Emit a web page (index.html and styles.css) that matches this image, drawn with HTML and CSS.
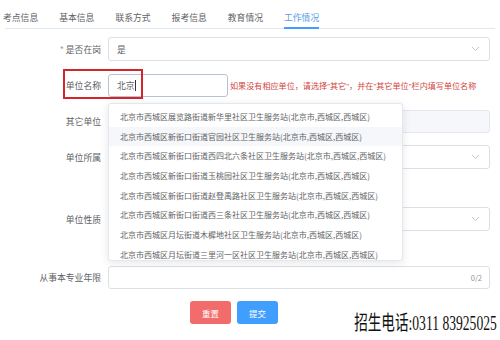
FILE: index.html
```html
<!DOCTYPE html>
<html lang="zh-CN">
<head>
  <meta charset="UTF-8">
  <title>工作情况</title>
  <link rel="stylesheet" href="styles.css">
</head>
<body>
  <div class="tabs">
    <span class="tab">考点信息</span>
    <span class="tab">基本信息</span>
    <span class="tab">联系方式</span>
    <span class="tab">报考信息</span>
    <span class="tab">教育情况</span>
    <span class="tab active">工作情况</span>
  </div>

  <form class="form">
    <div class="row">
      <label class="label"><span class="star">*</span> 是否在岗</label>
      <div class="field select">
        <span>是</span>
        <svg class="arrow" width="9" height="6" viewBox="0 0 9 6"><path d="M1 1l3.5 3.5L8 1" fill="none" stroke="#c0c4cc" stroke-width="1"/></svg>
      </div>
    </div>

    <div class="row">
      <label class="label">单位名称</label>
      <div class="field short focus"><span>北京</span><i class="caret"></i></div>
      <span class="hint">如果没有相应单位，请选择<q>其它</q>，并在<q>其它单位</q>栏内填写单位名称</span>
      <div class="mark"></div>

      <!-- autocomplete list -->
      <ul class="suggest">
        <li>北京市西城区展览路街道新华里社区卫生服务站(北京市,西城区,西城区)</li>
        <li class="hover">北京市西城区新街口街道官园社区卫生服务站(北京市,西城区,西城区)</li>
        <li>北京市西城区新街口街道西四北六条社区卫生服务站(北京市,西城区,西城区)</li>
        <li>北京市西城区新街口街道玉桃园社区卫生服务站(北京市,西城区,西城区)</li>
        <li>北京市西城区新街口街道赵登禹路社区卫生服务站(北京市,西城区,西城区)</li>
        <li>北京市西城区新街口街道西三条社区卫生服务站(北京市,西城区,西城区)</li>
        <li>北京市西城区月坛街道木樨地社区卫生服务站(北京市,西城区,西城区)</li>
        <li>北京市西城区月坛街道三里河一区社区卫生服务站(北京市,西城区,西城区)</li>
      </ul>
    </div>

    <div class="row">
      <label class="label">其它单位</label>
      <div class="field disabled"></div>
    </div>

    <div class="row">
      <label class="label">单位所属</label>
      <div class="field select">
        <span></span>
        <svg class="arrow" width="9" height="6" viewBox="0 0 9 6"><path d="M1 1l3.5 3.5L8 1" fill="none" stroke="#c0c4cc" stroke-width="1"/></svg>
      </div>
    </div>

    <div class="row gap-big">
      <label class="label">单位性质</label>
      <div class="field select">
        <span></span>
        <svg class="arrow" width="9" height="6" viewBox="0 0 9 6"><path d="M1 1l3.5 3.5L8 1" fill="none" stroke="#c0c4cc" stroke-width="1"/></svg>
      </div>
    </div>

    <div class="row gap-mid">
      <label class="label">从事本专业年限</label>
      <div class="field"><span></span><span class="count">0/2</span></div>
    </div>

    <div class="buttons">
      <button type="button" class="btn reset">重置</button>
      <button type="button" class="btn submit">提交</button>
    </div>
  </form>

  <div class="watermark">招生电话:0311 83925025</div>
</body>
</html>
```

FILE: styles.css
```css
body {
  margin: 0;
  width: 500px;
  height: 340px;
  overflow: hidden;
  background: #fff;
  font-family: "Noto Sans CJK SC", "Noto Sans", sans-serif;
  color: #606266;
  position: relative;
}

.tabs {
  display: flex;
  gap: 21px;
  height: 28px;
  margin: 0 5px;
  border-bottom: 1px solid #e4e7ed;
  font-size: 8.8px;
}

.tabs .tab {
  position: relative;
  line-height: 36px;
  color: #606266;
  white-space: nowrap;
}

.tabs .tab:first-child {
  margin-left: -2px;
}

.tabs .active {
  color: #5a9de6;
}

.tabs .active::after {
  content: "";
  position: absolute;
  left: 0;
  right: 0;
  bottom: -1px;
  height: 2px;
  background: #409eff;
}

.form {
  padding: 8px 10px 0 0;
}

.row {
  position: relative;
  display: flex;
  align-items: center;
  height: 24px;
  margin-bottom: 12px;
}

.row.gap-big {
  margin-top: 38px;
}

.row.gap-mid {
  margin-top: 34px;
}

.label {
  width: 101px;
  flex-shrink: 0;
  padding-right: 7px;
  text-align: right;
  font-size: 8.8px;
  color: #606266;
  white-space: nowrap;
}

.star {
  color: #a0a0a0;
}

.field {
  flex: 1;
  height: 23px;
  box-sizing: border-box;
  border: 1px solid #dcdfe6;
  border-radius: 3px;
  display: flex;
  align-items: center;
  justify-content: space-between;
  padding: 0 9px 0 8px;
  font-size: 8.8px;
  color: #606266;
  background: #fff;
}

.field.select {
  height: 24px;
}

.field.short {
  flex: none;
  width: 120px;
  justify-content: flex-start;
}

.field.focus {
  border-color: #b8c4d6;
}

.caret {
  display: inline-block;
  width: 1px;
  height: 11px;
  background: #333;
}

.field.disabled {
  background: #f5f7fa;
  border-color: #e4e7ed;
}

.arrow {
  display: block;
}

.count {
  font-size: 7.5px;
  color: #909399;
  margin-right: -2px;
}

.hint {
  margin-left: 2px;
  font-size: 8.1px;
  color: #d1453e;
  white-space: nowrap;
}

.hint q {
  quotes: '"' '"';
}

.hint q::before,
.hint q::after {
  font-family: "Liberation Sans", sans-serif;
}

/* red annotation box */
.mark {
  position: absolute;
  left: 63px;
  top: -4px;
  width: 80px;
  height: 30px;
  box-sizing: border-box;
  border: 2px solid #d3262b;
}

.suggest {
  position: absolute;
  left: 108px;
  top: 30px;
  width: 295px;
  height: 158px;
  margin: 0;
  padding: 3px 0 0;
  list-style: none;
  box-sizing: border-box;
  overflow: hidden;
  background: #fff;
  border: 1px solid #e4e7ed;
  border-radius: 3px;
  box-shadow: 0 2px 8px rgba(0, 0, 0, 0.1);
  z-index: 10;
}

.suggest li {
  height: 19.7px;
  line-height: 19.7px;
  padding-left: 11px;
  font-size: 8px;
  color: #606266;
  white-space: nowrap;
}

.suggest li.hover {
  background: #f5f7fa;
}

.buttons {
  display: flex;
  gap: 6px;
  padding-left: 190px;
}

.btn {
  width: 41px;
  height: 23px;
  border: none;
  border-radius: 3px;
  color: #fff;
  font-family: inherit;
  font-size: 8.5px;
  padding: 0;
}

.btn.reset {
  background: #f26c6c;
}

.btn.submit {
  background: #409eff;
}

.watermark {
  position: absolute;
  right: 3px;
  bottom: 4px;
  font-family: "Liberation Serif", "Noto Sans CJK SC", serif;
  font-size: 20px;
  color: #111;
  white-space: nowrap;
  transform: scaleX(0.68);
  transform-origin: right bottom;
}
```
